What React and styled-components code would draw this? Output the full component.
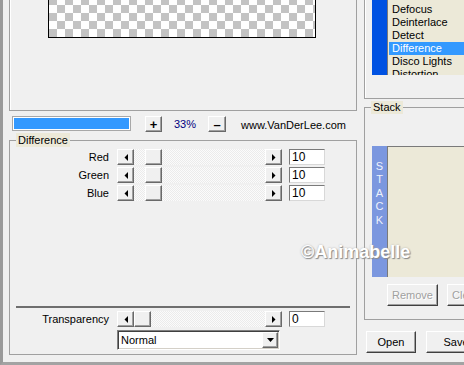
import React from "react";
import styled, { createGlobalStyle } from "styled-components";

const GlobalStyle = createGlobalStyle`
  html, body { margin: 0; padding: 0; background: #f0f0f0; }
  body {
    font-family: "Liberation Sans", Arial, sans-serif;
    font-size: 11px;
    color: #000;
  }
  * { box-sizing: border-box; }
`;

const FILTERS = ["Cutout", "Defocus", "Deinterlace", "Detect", "Difference", "Disco Lights", "Distortion"];
const CHANNELS = [
  { label: "Red", value: 10 },
  { label: "Green", value: 10 },
  { label: "Blue", value: 10 },
];

// thumb travel: 131px track - 17px thumb
const thumbOffset = (v) => Math.round(v * 1.14);

const LeftArrow = () => (
  <svg width="4" height="7" viewBox="0 0 4 7">
    <polygon points="4,0 4,7 0.5,3.5" fill="#000" />
  </svg>
);
const RightArrow = () => (
  <svg width="4" height="7" viewBox="0 0 4 7">
    <polygon points="0,0 0,7 3.5,3.5" fill="#000" />
  </svg>
);
const DownArrow = () => (
  <svg width="7" height="4" viewBox="0 0 7 4">
    <polygon points="0,0 7,0 3.5,4" fill="#000" />
  </svg>
);

function Slider({ label, value }) {
  return (
    <SliderRow>
      <RowLabel>{label}</RowLabel>
      <ScrollBar>
        <ArrowBtn><LeftArrow /></ArrowBtn>
        <Track>
          <Thumb $offset={thumbOffset(value)} />
        </Track>
        <ArrowBtn><RightArrow /></ArrowBtn>
      </ScrollBar>
      <Edit>{value}</Edit>
    </SliderRow>
  );
}

export default function App() {
  return (
    <Window>
      <GlobalStyle />

      <LeftCol>
        <PreviewPanel>
          <Checker />
        </PreviewPanel>

        <StatusRow>
          <Progress><ProgressFill /></Progress>
          <ZoomBtn>+</ZoomBtn>
          <ZoomValue>33%</ZoomValue>
          <ZoomBtn $wide>–</ZoomBtn>
          <Site>www.VanDerLee.com</Site>
        </StatusRow>

        <Group>
          <Legend>Difference</Legend>
          <GroupBody>
            <SliderList>
              {CHANNELS.map((c) => (
                <Slider key={c.label} label={c.label} value={c.value} />
              ))}
            </SliderList>
            <Separator />
            <Slider label="Transparency" value={0} />
            <SelectRow>
              <span />
              <Select>
                <SelectText>Normal</SelectText>
                <DropBtn><DownArrow /></DropBtn>
              </Select>
            </SelectRow>
          </GroupBody>
        </Group>
      </LeftCol>

      <RightCol>
        <FilterPanel>
          <FilterBox>
            <Sidebar $color="#0052e2" />
            <FilterList>
              {FILTERS.map((f) => (
                <FilterItem key={f} $selected={f === "Difference"}>{f}</FilterItem>
              ))}
            </FilterList>
          </FilterBox>
        </FilterPanel>

        <StackGroup>
          <StackLegend>Stack</StackLegend>
          <StackBody>
            <StackBox>
              <Sidebar $color="#7b97df">
                {"STACK".split("").map((ch, i) => (
                  <StackLetter key={i}>{ch}</StackLetter>
                ))}
              </Sidebar>
              <StackList />
            </StackBox>
            <StackButtons>
              <PushBtn $w={51} disabled>Remove</PushBtn>
              <PushBtn $w={51} disabled>Clear All</PushBtn>
            </StackButtons>
          </StackBody>
        </StackGroup>

        <FileButtons>
          <PushBtn $w={50}>Open</PushBtn>
          <PushBtn $w={60}>Save</PushBtn>
        </FileButtons>
      </RightCol>

      <Watermark>©Animabelle</Watermark>
    </Window>
  );
}

/* ===== window ===== */

const Window = styled.div`
  position: relative;
  width: 464px;
  height: 365px;
  display: flex;
  background: #f0f0f0;
  border-left: 3px solid #9a9a9a;
  border-bottom: 3px solid #a3a3a3;
  overflow: hidden;
`;

const bevel = `
  background: #f0f0f0;
  border: 1px solid;
  border-color: #fff #696969 #696969 #fff;
  box-shadow: inset -1px -1px 0 #a0a0a0;
  padding: 0;
  display: flex;
  align-items: center;
  justify-content: center;
`;

/* ===== left column ===== */

const LeftCol = styled.div`
  width: 348px;
  margin-left: 6px;
  flex-shrink: 0;
  display: flex;
  flex-direction: column;
`;

const PreviewPanel = styled.div`
  height: 111px;
  border: 1px solid #a0a0a0;
  border-top: none;
  box-shadow: inset 1px 0 0 #fff;
  padding-left: 38px;
`;

const Checker = styled.div`
  width: 268px;
  height: 38px;
  border: 1px solid #000;
  border-top: none;
  background-color: #fff;
  background-image: repeating-conic-gradient(#c3c3c3 0 25%, #fff 0 50%);
  background-size: 16px 16px;
  background-position: 0 bottom;
`;

const StatusRow = styled.div`
  height: 22px;
  display: flex;
  align-items: flex-start;
  padding: 5px 0 0 3px;
`;

const Progress = styled.div`
  width: 119px;
  height: 15px;
  border: 1px solid #a8a8a8;
  padding: 1px;
  background: #fff;
`;

const ProgressFill = styled.div`
  width: 100%;
  height: 100%;
  background: #3399ff;
`;

const ZoomBtn = styled.button`
  ${bevel}
  width: ${(p) => (p.$wide ? 18 : 17)}px;
  height: 16px;
  margin-left: ${(p) => (p.$wide ? 0 : 14)}px;
  font-family: "Liberation Sans", Arial, sans-serif;
  font-size: 13px;
  font-weight: bold;
  line-height: 1;
`;

const ZoomValue = styled.span`
  width: 46px;
  text-align: center;
  color: #000080;
  font-size: 11px;
  line-height: 16px;
`;

const Site = styled.span`
  margin-left: 15px;
  line-height: 16px;
  padding-top: 1px;
`;

const Group = styled.fieldset`
  margin: 0 0 7px;
  padding: 0;
  min-width: 0;
  border: 1px solid #a0a0a0;
  flex: 1;
`;

const Legend = styled.legend`
  margin-left: 6px;
  padding: 0 2px;
  background: #ece9d8;
  line-height: 14px;
  font-size: 11px;
`;

const GroupBody = styled.div`
  height: 207px;
  display: flex;
  flex-direction: column;
  padding: 2px 0 4px;
`;

const SliderList = styled.div`
  display: flex;
  flex-direction: column;
  gap: 2px;
`;

const SliderRow = styled.div`
  display: grid;
  grid-template-columns: 100px 165px 36px;
  column-gap: 7px;
  align-items: center;
  height: 16px;
`;

const RowLabel = styled.span`
  text-align: right;
  padding-right: 1px;
`;

const ScrollBar = styled.div`
  display: flex;
  height: 16px;
`;

const ArrowBtn = styled.div`
  ${bevel}
  width: 17px;
  height: 16px;
  flex-shrink: 0;
`;

const Track = styled.div`
  flex: 1;
  display: flex;
  background-color: #f7f7f7;
  background-image: repeating-conic-gradient(#ebebeb 0 25%, #fbfbfb 0 50%);
  background-size: 2px 2px;
`;

const Thumb = styled.div`
  ${bevel}
  width: 17px;
  height: 16px;
  margin-left: ${(p) => p.$offset}px;
`;

const Edit = styled.div`
  width: 36px;
  height: 16px;
  background: #fff;
  border: 1px solid;
  border-color: #7a7a7a #d8d8d8 #d8d8d8 #7a7a7a;
  padding-left: 2px;
  line-height: 14px;
  font-size: 12px;
`;

const Separator = styled.div`
  margin: auto 6px 3px;
  height: 2px;
  background: #6e6e6e;
`;

const SelectRow = styled(SliderRow)`
  height: 20px;
  margin-top: 3px;
`;

const Select = styled.div`
  width: 163px;
  height: 20px;
  display: flex;
  align-items: center;
  background: #fff;
  border: 1px solid;
  border-color: #808080 #fff #fff #808080;
  box-shadow: inset 1px 1px 0 #404040, inset -1px -1px 0 #d4d0c8;
  padding: 1px;
`;

const SelectText = styled.span`
  flex: 1;
  padding-left: 2px;
`;

const DropBtn = styled.div`
  ${bevel}
  width: 16px;
  height: 16px;
`;

/* ===== right column ===== */

const RightCol = styled.div`
  width: 180px;
  flex-shrink: 0;
  display: flex;
  flex-direction: column;
`;

const FilterPanel = styled.div`
  height: 99px;
  margin-left: 7px;
  border-left: 1px solid #a0a0a0;
  border-bottom: 1px solid #a0a0a0;
  box-shadow: inset 1px 0 0 #fff;
  padding-left: 7px;
`;

const FilterBox = styled.div`
  height: 75px;
  display: flex;
`;

const Sidebar = styled.div`
  width: 15px;
  flex-shrink: 0;
  background: ${(p) => p.$color};
  display: flex;
  flex-direction: column;
  align-items: center;
  padding-top: 14px;
`;

const FilterList = styled.div`
  flex: 1;
  background: #ece9d8;
  border-left: 1px solid #7a7a7a;
  overflow: hidden;
  padding-left: 1px;
  & > :first-child { margin-top: -10px; }
`;

const FilterItem = styled.div`
  height: 13px;
  line-height: 13px;
  font-size: 11px;
  padding-left: 3px;
  background: ${(p) => (p.$selected ? "#3399ff" : "transparent")};
  color: ${(p) => (p.$selected ? "#fff" : "#000")};
`;

const StackGroup = styled.fieldset`
  margin: 2px 0 0 7px;
  padding: 0;
  min-width: 0;
  border: 1px solid #a0a0a0;
`;

const StackLegend = styled(Legend)`
  line-height: 13px;
`;

const StackBody = styled.div`
  height: 205px;
  padding: 32px 0 0 7px;
`;

const StackBox = styled.div`
  height: 131px;
  display: flex;
`;

const StackLetter = styled.span`
  height: 13.4px;
  line-height: 13px;
  color: #eef2fc;
  font-size: 11px;
`;

const StackList = styled.div`
  flex: 1;
  background: #ece9d8;
  border-top: 1px solid #7a7a7a;
  border-left: 1px solid #7a7a7a;
`;

const StackButtons = styled.div`
  display: flex;
  gap: 9px;
  margin-top: 7px;
  padding-left: 15px;
`;

const PushBtn = styled.button`
  width: ${(p) => p.$w}px;
  height: 22px;
  flex-shrink: 0;
  background: #f0f0f0;
  border: 1px solid;
  border-color: #fff #404040 #404040 #fff;
  box-shadow: inset -1px -1px 0 #a0a0a0;
  padding: 0;
  font-family: "Liberation Sans", Arial, sans-serif;
  font-size: 11px;
  color: #000;
  white-space: nowrap;
  overflow: hidden;

  &:disabled {
    color: #a0a0a0;
    text-shadow: 1px 1px 0 #fff;
  }
`;

const FileButtons = styled.div`
  display: flex;
  gap: 10px;
  margin: 11px 0 0 9px;
`;

const Watermark = styled.div`
  position: absolute;
  left: 298px;
  top: 242px;
  font-family: "Liberation Sans", Arial, sans-serif;
  font-size: 18px;
  font-weight: bold;
  color: #fff;
  text-shadow: 1px 1px 1px #8a8a8a, 0 0 2px #b0b0b0;
  pointer-events: none;
`;
